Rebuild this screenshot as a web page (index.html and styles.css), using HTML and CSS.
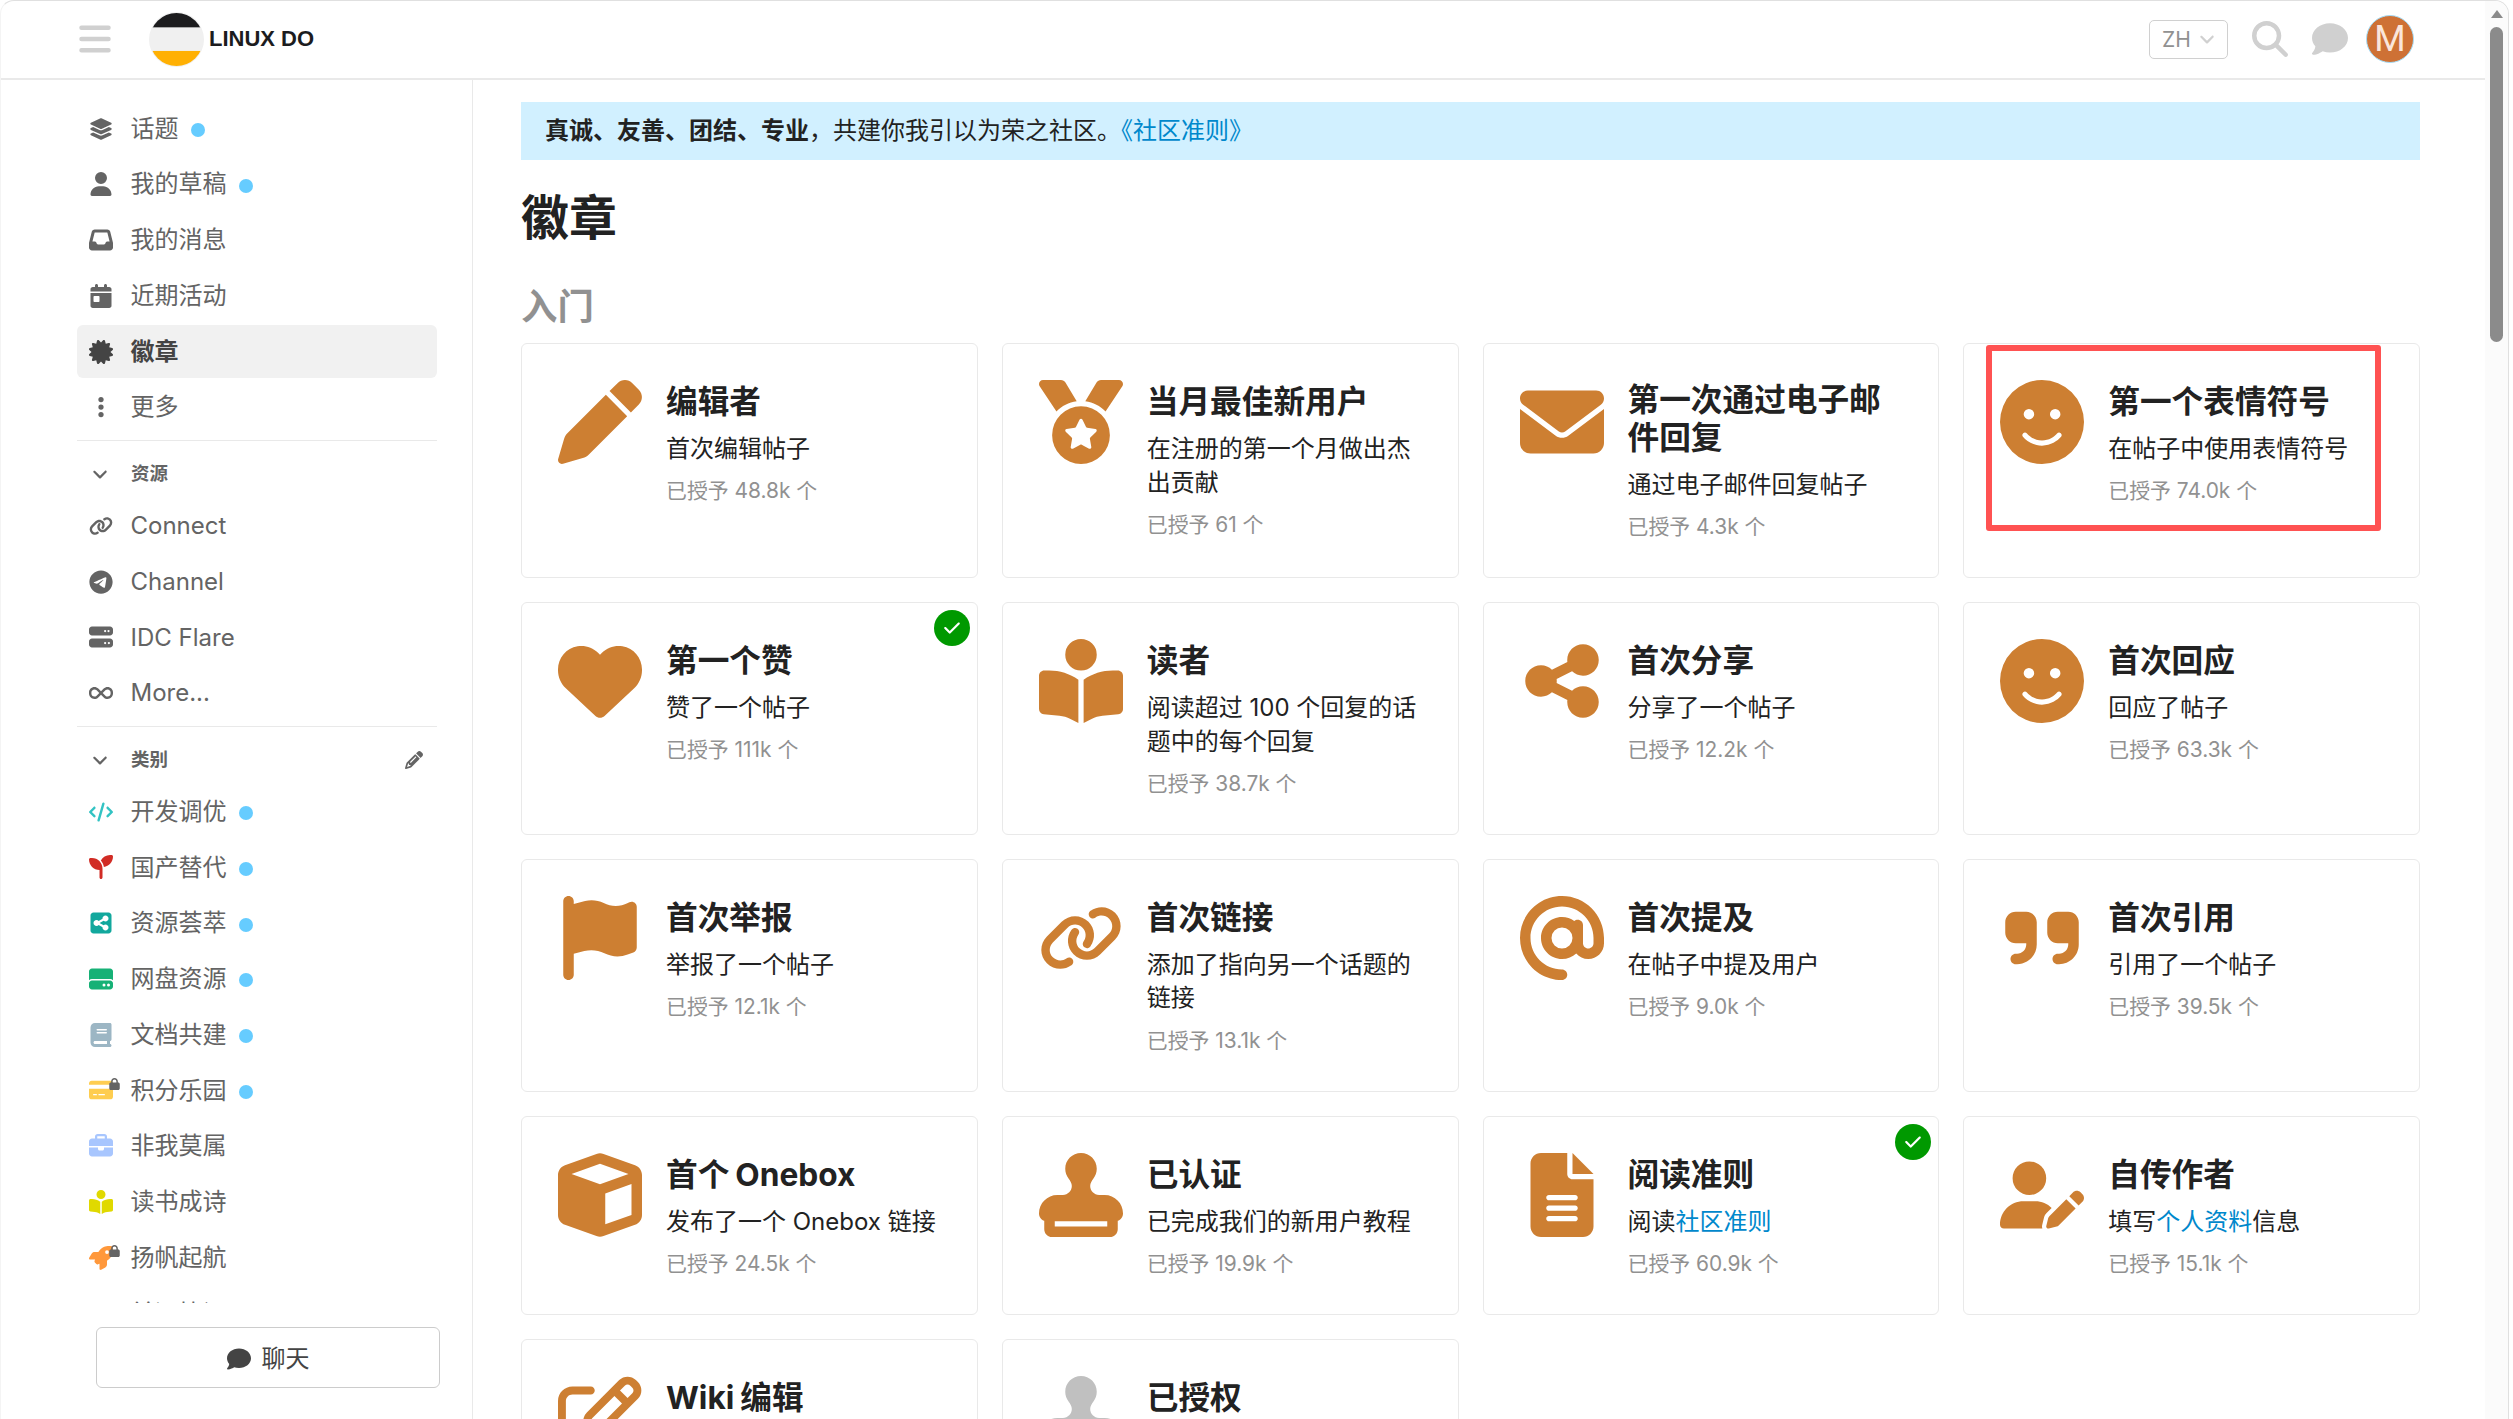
FILE: index.html
```html
<!DOCTYPE html>
<html lang="zh-CN">
<head>
    <meta charset="UTF-8">
    <meta name="viewport" content="width=device-width, initial-scale=1.0">
    <title>徽章 - LINUX DO</title>
    <link rel="stylesheet" href="styles.css">
</head>
<body>
    <!-- Icon sprite -->
    <svg class="sprite" xmlns="http://www.w3.org/2000/svg">
        <symbol id="bars" viewBox="0 0 448 512"><path d="M32 64h384a32 32 0 0 1 0 64H32a32 32 0 0 1 0-64zM32 224h384a32 32 0 0 1 0 64H32a32 32 0 0 1 0-64zM32 384h384a32 32 0 0 1 0 64H32a32 32 0 0 1 0-64z"/></symbol>
        <symbol id="layer-group" viewBox="0 0 576 512"><path d="M264.5 5.2c14.9-6.9 32.1-6.9 47 0l218.6 101c8.5 3.9 13.9 12.4 13.9 21.8s-5.4 17.9-13.9 21.8l-218.6 101c-14.9 6.9-32.1 6.9-47 0L45.9 149.8C37.4 145.8 32 137.3 32 128s5.4-17.9 13.9-21.8L264.5 5.2zM476.9 209.6l53.2 24.6c8.5 3.9 13.9 12.4 13.9 21.8s-5.4 17.9-13.9 21.8l-218.6 101c-14.9 6.9-32.1 6.9-47 0L45.9 277.8C37.4 273.8 32 265.3 32 256s5.4-17.9 13.9-21.8l53.2-24.6 152 70.2c23.4 10.8 50.4 10.8 73.8 0l152-70.2zm-152 198.2l152-70.2 53.2 24.6c8.5 3.9 13.9 12.4 13.9 21.8s-5.4 17.9-13.9 21.8l-218.6 101c-14.9 6.9-32.1 6.9-47 0L45.9 405.8C37.4 401.8 32 393.3 32 384s5.4-17.9 13.9-21.8l53.2-24.6 152 70.2c23.4 10.8 50.4 10.8 73.8 0z"/></symbol>
        <symbol id="user" viewBox="0 0 448 512"><path d="M224 256A128 128 0 1 0 224 0a128 128 0 1 0 0 256zm-45.7 48C79.8 304 0 383.8 0 482.3C0 498.7 13.3 512 29.7 512l388.6 0c16.4 0 29.7-13.3 29.7-29.7C448 383.8 368.2 304 269.7 304l-91.4 0z"/></symbol>
        <symbol id="inbox" viewBox="0 0 512 512"><path d="M121 32C91.6 32 66 52 58.9 80.5L1.9 308.4C.6 313.5 0 318.7 0 323.9L0 416c0 35.3 28.7 64 64 64l384 0c35.3 0 64-28.7 64-64l0-92.1c0-5.2-.6-10.4-1.9-15.5l-57-227.9C446 52 420.4 32 391 32L121 32zm0 64l270 0 48 192-51.2 0c-12.1 0-23.2 6.8-28.6 17.7l-14.3 28.6c-5.4 10.8-16.5 17.7-28.6 17.7l-120.4 0c-12.1 0-23.2-6.8-28.6-17.7l-14.3-28.6c-5.4-10.8-16.5-17.7-28.6-17.7L73 288 121 96z"/></symbol>
        <symbol id="calendar-day" viewBox="0 0 448 512"><path d="M128 0c17.7 0 32 14.3 32 32l0 32 128 0 0-32c0-17.7 14.3-32 32-32s32 14.3 32 32l0 32 48 0c26.5 0 48 21.5 48 48l0 48L0 160l0-48C0 85.5 21.5 64 48 64l48 0 0-32c0-17.7 14.3-32 32-32zM0 192l448 0 0 272c0 26.5-21.5 48-48 48L48 512c-26.5 0-48-21.5-48-48L0 192zm80 64c-8.8 0-16 7.2-16 16l0 96c0 8.8 7.2 16 16 16l96 0c8.8 0 16-7.2 16-16l0-96c0-8.8-7.2-16-16-16l-96 0z"/></symbol>
        <symbol id="certificate" viewBox="0 0 512 512"><path d="M211 7.3C205 1 196-1.4 187.6 .8s-14.9 8.9-17.1 17.3L154.7 80.6l-62-17.5c-8.4-2.4-17.4 0-23.5 6.1s-8.5 15.1-6.1 23.5l17.5 62L18.1 170.6c-8.4 2.1-15 8.7-17.3 17.1S1 205 7.3 211l46.2 45L7.3 301C1 307-1.4 316 .8 324.4s8.9 14.9 17.3 17.1l62.5 15.8-17.5 62c-2.4 8.4 0 17.4 6.1 23.5s15.1 8.5 23.5 6.1l62-17.5 15.8 62.5c2.1 8.4 8.7 15 17.1 17.3s17.3-.2 23.4-6.4l45-46.2 45 46.2c6.1 6.2 15 8.7 23.4 6.4s14.9-8.9 17.1-17.3l15.8-62.5 62 17.5c8.4 2.4 17.4 0 23.5-6.1s8.5-15.1 6.1-23.5l-17.5-62 62.5-15.8c8.4-2.1 15-8.7 17.3-17.1s-.2-17.4-6.4-23.4l-46.2-45 46.2-45c6.2-6.1 8.7-15 6.4-23.4s-8.9-14.9-17.3-17.1l-62.5-15.8 17.5-62c2.4-8.4 0-17.4-6.1-23.5s-15.1-8.5-23.5-6.1l-62 17.5L341.4 18.1c-2.1-8.4-8.7-15-17.1-17.3S307 1 301 7.3L256 53.5 211 7.3z"/></symbol>
        <symbol id="ellipsis" viewBox="0 0 128 512"><circle cx="64" cy="96" r="56"/><circle cx="64" cy="256" r="56"/><circle cx="64" cy="416" r="56"/></symbol>
        <symbol id="angle-down" viewBox="0 0 448 512"><path d="M201.4 374.6c12.5 12.5 32.8 12.5 45.3 0l160-160c12.5-12.5 12.5-32.8 0-45.3s-32.8-12.5-45.3 0L224 306.7 86.6 169.4c-12.5-12.5-32.8-12.5-45.3 0s-12.5 32.8 0 45.3l160 160z"/></symbol>
        <symbol id="link" viewBox="0 0 640 512"><path d="M579.8 267.7c56.5-56.5 56.5-148 0-204.5c-50-50-128.8-56.5-186.3-15.4l-1.6 1.1c-14.4 10.3-17.7 30.3-7.4 44.6s30.3 17.7 44.6 7.4l1.6-1.1c32.1-22.9 76-19.3 103.8 8.6c31.5 31.5 31.5 82.5 0 114L422.3 334.8c-31.5 31.5-82.5 31.5-114 0c-27.9-27.9-31.5-71.8-8.6-103.8l1.1-1.6c10.3-14.4 6.9-34.4-7.4-44.6s-34.4-6.9-44.6 7.4l-1.1 1.6C206.5 251.2 213 330 263 380c56.5 56.5 148 56.5 204.5 0L579.8 267.7zM60.2 244.3c-56.5 56.5-56.5 148 0 204.5c50 50 128.8 56.5 186.3 15.4l1.6-1.1c14.4-10.3 17.7-30.3 7.4-44.6s-30.3-17.7-44.6-7.4l-1.6 1.1c-32.1 22.9-76 19.3-103.8-8.6C74 372 74 321 105.5 289.5L217.7 177.2c31.5-31.5 82.5-31.5 114 0c27.9 27.9 31.5 71.8 8.6 103.9l-1.1 1.6c-10.3 14.4-6.9 34.4 7.4 44.6s34.4 6.9 44.6-7.4l1.1-1.6C433.5 260.8 427 182 377 132c-56.5-56.5-148-56.5-204.5 0L60.2 244.3z"/></symbol>
        <symbol id="telegram" viewBox="0 0 496 512"><path d="M248,8C111.033,8,0,119.033,0,256S111.033,504,248,504,496,392.967,496,256,384.967,8,248,8ZM362.952,176.66c-3.732,39.215-19.881,134.378-28.1,178.3-3.476,18.584-10.322,24.816-16.948,25.425-14.4,1.326-25.338-9.517-39.287-18.661-21.827-14.308-34.158-23.215-55.346-37.177-24.485-16.135-8.612-25,5.342-39.5,3.652-3.793,67.107-61.51,68.335-66.746.153-.655.3-3.1-1.154-4.384s-3.59-.849-5.135-.5q-3.283.746-104.608,69.142-14.845,10.194-26.894,9.934c-8.855-.191-25.888-5.006-38.551-9.123-15.531-5.048-27.875-7.717-26.8-16.291q.84-6.7,18.45-13.7,108.446-47.248,144.628-62.3c68.872-28.647,83.183-33.623,92.511-33.789,2.052-.034,6.639.474,9.61,2.885a10.452,10.452,0,0,1,3.53,6.716A43.765,43.765,0,0,1,362.952,176.66Z"/></symbol>
        <symbol id="server" viewBox="0 0 512 512"><path d="M64 32C28.7 32 0 60.7 0 96l0 64c0 35.3 28.7 64 64 64l384 0c35.3 0 64-28.7 64-64l0-64c0-35.3-28.7-64-64-64L64 32zm280 72a24 24 0 1 1 0 48 24 24 0 1 1 0-48zm48 24a24 24 0 1 1 48 0 24 24 0 1 1 -48 0zM64 288c-35.3 0-64 28.7-64 64l0 64c0 35.3 28.7 64 64 64l384 0c35.3 0 64-28.7 64-64l0-64c0-35.3-28.7-64-64-64L64 288zm280 72a24 24 0 1 1 0 48 24 24 0 1 1 0-48zm56 24a24 24 0 1 1 48 0 24 24 0 1 1 -48 0z"/></symbol>
        <symbol id="infinity" viewBox="0 0 640 512"><path d="M0 241.1C0 161 65 96 145.1 96c38.5 0 75.4 15.3 102.6 42.5L320 210.7l72.2-72.2C419.5 111.3 456.4 96 494.9 96C575 96 640 161 640 241.1l0 29.7C640 351 575 416 494.9 416c-38.5 0-75.4-15.3-102.6-42.5L320 301.3l-72.2 72.2C220.5 400.7 183.6 416 145.1 416C65 416 0 351 0 270.9l0-29.7zM274.7 256l-72.2-72.2c-15.2-15.2-35.9-23.8-57.4-23.8C100.3 160 64 196.3 64 241.1l0 29.7c0 44.8 36.3 81.1 81.1 81.1c21.5 0 42.2-8.5 57.4-23.8L274.7 256zm90.5 0l72.2 72.2c15.2 15.2 35.9 23.8 57.4 23.8c44.8 0 81.1-36.3 81.1-81.1l0-29.7c0-44.8-36.3-81.1-81.1-81.1c-21.5 0-42.2 8.5-57.4 23.8L365.3 256z"/></symbol>
        <symbol id="pencil" viewBox="0 0 512 512"><path d="M410.3 231l11.3-11.3-33.9-33.9-62.1-62.1L291.7 89.8l-11.3 11.3-22.6 22.6L58.6 322.9c-10.4 10.4-18 23.3-22.2 37.4L1 480.7c-2.5 8.4-.2 17.5 6.1 23.7s15.3 8.5 23.7 6.1l120.3-35.4c14.1-4.2 27-11.8 37.4-22.2L387.7 253.7 410.3 231zM160 399.4l-9.1 22.7c-4 3.1-8.5 5.4-13.3 6.9L59.4 452l23-78.1c1.4-4.9 3.8-9.4 6.9-13.3l22.7-9.1 0 32c0 8.8 7.2 16 16 16l32 0zM362.7 18.7L348.3 33.2 325.7 55.8 314.3 67.1l33.9 33.9 62.1 62.1 33.9 33.9 11.3-11.3 22.6-22.6 14.5-14.5c25-25 25-65.5 0-90.5L453.3 18.7c-25-25-65.5-25-90.5 0zm-47.4 168l-144 144c-6.2 6.2-16.4 6.2-22.6 0s-6.2-16.4 0-22.6l144-144c6.2-6.2 16.4-6.2 22.6 0s6.2 16.4 0 22.6z"/></symbol>
        <symbol id="pen" viewBox="0 0 512 512"><path d="M362.7 19.3L314.3 67.7 444.3 197.7l48.4-48.4c25-25 25-65.5 0-90.5L453.3 19.3c-25-25-65.5-25-90.5 0zm-71 71L58.6 323.5c-10.4 10.4-18 23.3-22.2 37.4L1 481.2C-1.5 489.7 .8 498.8 7 505s15.3 8.5 23.7 6.1l120.3-35.4c14.1-4.2 27-11.8 37.4-22.2L421.7 220.3 291.7 90.3z"/></symbol>
        <symbol id="code" viewBox="0 0 640 512"><path d="M392.8 1.2c-17-4.9-34.7 5-39.6 22l-128 448c-4.9 17 5 34.7 22 39.6s34.7-5 39.6-22l128-448c4.9-17-5-34.7-22-39.6zm80.6 120.1c-12.5 12.5-12.5 32.8 0 45.3L562.7 256l-89.4 89.4c-12.5 12.5-12.5 32.8 0 45.3s32.8 12.5 45.3 0l112-112c12.5-12.5 12.5-32.8 0-45.3l-112-112c-12.5-12.5-32.8-12.5-45.3 0zm-306.7 0c-12.5-12.5-32.8-12.5-45.3 0l-112 112c-12.5 12.5-12.5 32.8 0 45.3l112 112c12.5 12.5 32.8 12.5 45.3 0s12.5-32.8 0-45.3L77.3 256l89.4-89.4c12.5-12.5 12.5-32.8 0-45.3z"/></symbol>
        <symbol id="seedling" viewBox="0 0 512 512"><path d="M512 32c0 113.6-84.6 207.5-194.2 222c-7.1-53.4-30.6-101.6-65.3-139.3C290.8 46.3 364 0 448 0l32 0c17.7 0 32 14.3 32 32zM0 96C0 78.3 14.3 64 32 64l32 0c123.7 0 224 100.3 224 224l0 32 0 160c0 17.7-14.3 32-32 32s-32-14.3-32-32l0-160C100.3 320 0 219.7 0 96z"/></symbol>
        <symbol id="square-share" viewBox="0 0 448 512"><path d="M64 32C28.7 32 0 60.7 0 96L0 416c0 35.3 28.7 64 64 64l320 0c35.3 0 64-28.7 64-64l0-320c0-35.3-28.7-64-64-64L64 32zM384 160c0 35.3-28.7 64-64 64c-15.4 0-29.5-5.4-40.6-14.5L194.1 256l85.3 46.5c11-9.1 25.2-14.5 40.6-14.5c35.3 0 64 28.7 64 64s-28.7 64-64 64s-64-28.7-64-64c0-2.5 .1-4.9 .4-7.3L174.5 300c-11.7 12.3-28.2 20-46.5 20c-35.3 0-64-28.7-64-64s28.7-64 64-64c18.3 0 34.8 7.7 46.5 20l81.9-44.7c-.3-2.4-.4-4.9-.4-7.3c0-35.3 28.7-64 64-64s64 28.7 64 64z"/></symbol>
        <symbol id="hard-drive" viewBox="0 0 512 512"><path d="M0 96C0 60.7 28.7 32 64 32l384 0c35.3 0 64 28.7 64 64l0 184.4c-17-15.2-39.4-24.4-64-24.4L64 256c-24.6 0-47 9.2-64 24.4L0 96zM64 288l384 0c35.3 0 64 28.7 64 64l0 64c0 35.3-28.7 64-64 64L64 480c-35.3 0-64-28.7-64-64l0-64c0-35.3 28.7-64 64-64zM320 416a32 32 0 1 0 0-64 32 32 0 1 0 0 64zm128-32a32 32 0 1 0 -64 0 32 32 0 1 0 64 0z"/></symbol>
        <symbol id="book" viewBox="0 0 448 512"><path d="M96 0C43 0 0 43 0 96L0 416c0 53 43 96 96 96l288 0 32 0c17.7 0 32-14.3 32-32s-14.3-32-32-32l0-64c17.7 0 32-14.3 32-32l0-320c0-17.7-14.3-32-32-32L384 0 96 0zm0 384l256 0 0 64L96 448c-17.7 0-32-14.3-32-32s14.3-32 32-32zm32-240c0-8.8 7.2-16 16-16l192 0c8.8 0 16 7.2 16 16s-7.2 16-16 16l-192 0c-8.8 0-16-7.2-16-16zm16 48l192 0c8.8 0 16 7.2 16 16s-7.2 16-16 16l-192 0c-8.8 0-16-7.2-16-16s7.2-16 16-16z"/></symbol>
        <symbol id="credit-card" viewBox="0 0 576 512"><path d="M64 32C28.7 32 0 60.7 0 96l0 32 576 0 0-32c0-35.3-28.7-64-64-64L64 32zM576 224L0 224 0 416c0 35.3 28.7 64 64 64l448 0c35.3 0 64-28.7 64-64l0-192zM112 352l64 0c8.8 0 16 7.2 16 16s-7.2 16-16 16l-64 0c-8.8 0-16-7.2-16-16s7.2-16 16-16zm112 16c0-8.8 7.2-16 16-16l128 0c8.8 0 16 7.2 16 16s-7.2 16-16 16l-128 0c-8.8 0-16-7.2-16-16z"/></symbol>
        <symbol id="briefcase" viewBox="0 0 512 512"><path d="M184 48l144 0c4.4 0 8 3.6 8 8l0 40L176 96l0-40c0-4.4 3.6-8 8-8zm-56 8l0 40L64 96C28.7 96 0 124.7 0 160l0 96 192 0 128 0 192 0 0-96c0-35.3-28.7-64-64-64l-64 0 0-40c0-30.9-25.1-56-56-56L184 0c-30.9 0-56 25.1-56 56zM512 288l-192 0 0 32c0 17.7-14.3 32-32 32l-64 0c-17.7 0-32-14.3-32-32l0-32L0 288 0 416c0 35.3 28.7 64 64 64l384 0c35.3 0 64-28.7 64-64l0-128z"/></symbol>
        <symbol id="reader" viewBox="0 0 512 512"><path d="M160 96a96 96 0 1 1 192 0A96 96 0 1 1 160 96zm80 152l0 264-48.4-24.2c-20.9-10.4-43.5-17-66.8-19.3l-96-9.6C12.5 457.2 0 443.5 0 427L0 224c0-17.7 14.3-32 32-32l30.3 0c63.6 0 125.6 19.6 177.7 56zm32 264l0-264c52.1-36.4 114.1-56 177.7-56l30.3 0c17.7 0 32 14.3 32 32l0 203c0 16.4-12.5 30.2-28.8 31.8l-96 9.6c-23.2 2.3-45.9 8.9-66.8 19.3L272 512z"/></symbol>
        <symbol id="rocket" viewBox="0 0 512 512"><path d="M156.6 384.9L125.7 354c-8.5-8.5-11.5-20.8-7.7-32.2c3-8.9 7-20.5 11.8-33.8L24 288c-8.6 0-16.6-4.6-20.9-12.1s-4.2-16.7 .2-24.1l52.5-88.5c13-21.9 36.5-35.3 61.9-35.3l82.3 0c2.4-4 4.8-7.7 7.2-11.3C289.1-4.1 411.1-8.1 483.9 5.3c11.6 2.1 20.6 11.2 22.8 22.8c13.4 72.9 9.3 194.8-111.4 276.7c-3.5 2.4-7.3 4.8-11.3 7.2v82.3c0 25.4-13.4 49-35.3 61.9l-88.5 52.5c-7.4 4.4-16.6 4.5-24.1 .2s-12.1-12.2-12.1-20.9V380.8c-14.1 4.9-26.4 8.9-35.7 11.9c-11.2 3.6-23.4 .5-31.8-7.8zM384 168a40 40 0 1 0 0-80 40 40 0 1 0 0 80z"/></symbol>
        <symbol id="lock" viewBox="0 0 448 512"><path d="M144 144l0 48 160 0 0-48c0-44.2-35.8-80-80-80s-80 35.8-80 80zM80 192l0-48C80 64.5 144.5 0 224 0s144 64.5 144 144l0 48 16 0c35.3 0 64 28.7 64 64l0 192c0 35.3-28.7 64-64 64L64 512c-35.3 0-64-28.7-64-64L0 256c0-35.3 28.7-64 64-64l16 0z"/></symbol>
        <symbol id="comment" viewBox="0 0 512 512"><path d="M512 240c0 114.9-114.6 208-256 208c-37.1 0-72.3-6.4-104.1-17.9c-11.9 8.7-31.3 20.6-54.3 30.6C73.6 471.1 44.7 480 16 480c-6.5 0-12.3-3.9-14.8-9.9c-2.5-6-1.1-12.8 3.4-17.4l.3-.3c.3-.3 .7-.7 1.3-1.4c1.1-1.2 2.8-3.1 4.9-5.7c4.1-5 9.6-12.4 15.2-21.6c10-16.6 19.5-38.4 21.4-62.9C17.7 326.8 0 285.1 0 240C0 125.1 114.6 32 256 32s256 93.1 256 208z"/></symbol>
        <symbol id="search" viewBox="0 0 512 512"><path d="M416 208c0 45.9-14.9 88.3-40 122.7L502.6 457.4c12.5 12.5 12.5 32.8 0 45.3s-32.8 12.5-45.3 0L330.7 376c-34.4 25.2-76.8 40-122.7 40C93.1 416 0 322.9 0 208S93.1 0 208 0S416 93.1 416 208zM208 352a144 144 0 1 0 0-288 144 144 0 1 0 0 288z"/></symbol>
        <symbol id="medal" viewBox="0 0 512 512"><path d="M4.1 38.2C1.4 34.2 0 29.4 0 24.6C0 11 11 0 24.6 0L133.9 0c11.2 0 21.7 5.9 27.4 15.5l68.5 114.1c-48.2 6.1-91.3 28.6-123.4 61.9L4.1 38.2zm503.7 0L405.6 191.5c-32.1-33.3-75.2-55.8-123.4-61.9L350.7 15.5C356.5 5.9 366.9 0 378.1 0L487.4 0C501 0 512 11 512 24.6c0 4.8-1.4 9.6-4.1 13.6zM80 336a176 176 0 1 1 352 0A176 176 0 1 1 80 336zm184.4-94.9c-3.4-7-13.3-7-16.8 0l-22.4 45.4c-1.4 2.8-4 4.7-7 5.1L168 298.9c-7.7 1.1-10.7 10.5-5.2 16l36.3 35.4c2.2 2.2 3.2 5.2 2.7 8.3l-8.6 49.9c-1.3 7.6 6.7 13.5 13.6 9.9l44.8-23.6c2.7-1.4 6-1.4 8.7 0l44.8 23.6c6.9 3.6 14.9-2.2 13.6-9.9l-8.6-49.9c-.5-3 .5-6.1 2.7-8.3l36.3-35.4c5.6-5.4 2.5-14.8-5.2-16l-50.1-7.3c-3-.4-5.7-2.4-7-5.1l-22.4-45.4z"/></symbol>
        <symbol id="envelope" viewBox="0 0 512 512"><path d="M48 64C21.5 64 0 85.5 0 112c0 15.1 7.1 29.3 19.2 38.4L236.8 313.6c11.4 8.5 27 8.5 38.4 0L492.8 150.4c12.1-9.1 19.2-23.3 19.2-38.4c0-26.5-21.5-48-48-48L48 64zM0 176L0 384c0 35.3 28.7 64 64 64l384 0c35.3 0 64-28.7 64-64l0-208L294.4 339.2c-22.8 17.1-54 17.1-76.8 0L0 176z"/></symbol>
        <symbol id="smile" viewBox="0 0 512 512"><path d="M256 512A256 256 0 1 0 256 0a256 256 0 1 0 0 512zM164.1 325.5C182 346.2 212.6 368 256 368s74-21.8 91.9-42.5c5.8-6.7 15.9-7.4 22.6-1.6s7.4 15.9 1.6 22.6C349.8 372.1 311.1 400 256 400s-93.8-27.9-116.1-53.5c-5.8-6.7-5.1-16.8 1.6-22.6s16.8-5.1 22.6 1.6zM144.4 208a32 32 0 1 1 64 0 32 32 0 1 1 -64 0zm192-32a32 32 0 1 1 0 64 32 32 0 1 1 0-64z"/></symbol>
        <symbol id="heart" viewBox="0 0 512 512"><path d="M47.6 300.4L228.3 469.1c7.5 7 17.4 10.9 27.7 10.9s20.2-3.9 27.7-10.9L464.4 300.4c30.4-28.3 47.6-68 47.6-109.5v-5.8c0-69.9-50.5-129.5-119.4-141C347 36.5 300.6 51.4 268 84L256 96 244 84c-32.6-32.6-79-47.5-124.6-39.9C50.5 55.6 0 115.2 0 185.1v5.8c0 41.5 17.2 81.2 47.6 109.5z"/></symbol>
        <symbol id="share" viewBox="0 0 448 512"><path d="M352 224c53 0 96-43 96-96s-43-96-96-96s-96 43-96 96c0 4 .2 8 .7 11.9l-94.1 47C145.4 170.2 121.9 160 96 160c-53 0-96 43-96 96s43 96 96 96c25.9 0 49.4-10.2 66.6-26.9l94.1 47c-.5 3.9-.7 7.8-.7 11.9c0 53 43 96 96 96s96-43 96-96s-43-96-96-96c-25.9 0-49.4 10.2-66.6 26.9l-94.1-47c.5-3.9 .7-7.8 .7-11.9s-.2-8-.7-11.9l94.1-47C302.6 213.8 326.1 224 352 224z"/></symbol>
        <symbol id="flag" viewBox="0 0 448 512"><path d="M64 32C64 14.3 49.7 0 32 0S0 14.3 0 32L0 64 0 368 0 480c0 17.7 14.3 32 32 32s32-14.3 32-32l0-128 64.3-16.1c41.1-10.3 84.6-5.5 122.5 13.4c44.2 22.1 95.5 24.8 141.7 7.4l34.7-13c12.5-4.7 20.8-16.6 20.8-30l0-247.7c0-23-24.2-38-44.8-27.7l-9.6 4.8c-46.3 23.2-100.8 23.2-147.1 0c-35.1-17.6-75.4-22-113.5-12.5L64 48l0-16z"/></symbol>
        <symbol id="at" viewBox="0 0 512 512"><path d="M256 64C150 64 64 150 64 256s86 192 192 192c17.7 0 32 14.3 32 32s-14.3 32-32 32C114.6 512 0 397.4 0 256S114.6 0 256 0S512 114.6 512 256l0 32c0 53-43 96-96 96c-29.3 0-55.6-13.2-73.2-33.9C320 371.1 289.5 384 256 384c-70.7 0-128-57.3-128-128s57.3-128 128-128c27.9 0 53.7 8.9 74.7 24.1c5.7-5 13.1-8.1 21.3-8.1c17.7 0 32 14.3 32 32l0 80 0 32c0 17.7 14.3 32 32 32s32-14.3 32-32l0-32c0-106-86-192-192-192zm64 192a64 64 0 1 0 -128 0 64 64 0 1 0 128 0z"/></symbol>
        <symbol id="quote-right" viewBox="0 0 448 512"><path d="M448 296c0 66.3-53.7 120-120 120l-8 0c-17.7 0-32-14.3-32-32s14.3-32 32-32l8 0c30.9 0 56-25.1 56-56l0-8-64 0c-35.3 0-64-28.7-64-64l0-64c0-35.3 28.7-64 64-64l64 0c35.3 0 64 28.7 64 64l0 32 0 32 0 72zm-256 0c0 66.3-53.7 120-120 120l-8 0c-17.7 0-32-14.3-32-32s14.3-32 32-32l8 0c30.9 0 56-25.1 56-56l0-8-64 0c-35.3 0-64-28.7-64-64l0-64c0-35.3 28.7-64 64-64l64 0c35.3 0 64 28.7 64 64l0 32 0 32 0 72z"/></symbol>
        <symbol id="cube" viewBox="0 0 512 512"><path d="M234.5 5.7c13.9-5 29.1-5 43.1 0l192 68.6C495 83.4 512 107.5 512 134.6l0 242.9c0 27-17 51.2-42.5 60.3l-192 68.6c-13.9 5-29.1 5-43.1 0l-192-68.6C17 428.6 0 404.5 0 377.4L0 134.6c0-27 17-51.2 42.5-60.3l192-68.6zM256 66L82.3 128 256 190l173.7-62L256 66zm32 368.6l160-57.1 0-188L288 246.6l0 188z"/></symbol>
        <symbol id="stamp" viewBox="0 0 512 512"><path d="M312 201.8c0-17.4 9.2-33.2 19.9-47C344.5 138.5 352 118.1 352 96c0-53-43-96-96-96s-96 43-96 96c0 22.1 7.5 42.5 20.1 58.8c10.7 13.8 19.9 29.6 19.9 47c0 29.9-24.3 54.2-54.2 54.2L112 256C50.1 256 0 306.1 0 368c0 20.9 13.4 38.7 32 45.3L32 464c0 26.5 21.5 48 48 48l352 0c26.5 0 48-21.5 48-48l0-50.7c18.6-6.6 32-24.4 32-45.3c0-61.9-50.1-112-112-112l-33.8 0c-29.9 0-54.2-24.3-54.2-54.2zM416 416l0 32L96 448l0-32 320 0z"/></symbol>
        <symbol id="file-lines" viewBox="0 0 384 512"><path d="M64 0C28.7 0 0 28.7 0 64L0 448c0 35.3 28.7 64 64 64l256 0c35.3 0 64-28.7 64-64l0-288-128 0c-17.7 0-32-14.3-32-32L224 0 64 0zM256 0l0 128 128 0L256 0zM112 256l160 0c8.8 0 16 7.2 16 16s-7.2 16-16 16l-160 0c-8.8 0-16-7.2-16-16s7.2-16 16-16zm0 64l160 0c8.8 0 16 7.2 16 16s-7.2 16-16 16l-160 0c-8.8 0-16-7.2-16-16s7.2-16 16-16zm0 64l160 0c8.8 0 16 7.2 16 16s-7.2 16-16 16l-160 0c-8.8 0-16-7.2-16-16s7.2-16 16-16z"/></symbol>
        <symbol id="user-pen" viewBox="0 0 640 512"><path d="M224 256A128 128 0 1 0 224 0a128 128 0 1 0 0 256zm-45.7 48C79.8 304 0 383.8 0 482.3C0 498.7 13.3 512 29.7 512l293.1 0c-3.1-8.8-3.7-18.4-1.4-27.8l15-60.1c2.8-11.3 8.6-21.5 16.8-29.7l40.3-40.3c-32.1-31-75.7-50.1-123.9-50.1l-91.4 0zm435.5-68.3c-15.6-15.6-40.9-15.6-56.6 0l-29.4 29.4 71 71 29.4-29.4c15.6-15.6 15.6-40.9 0-56.6l-14.4-14.4zM375.9 417c-4.1 4.1-7 9.2-8.4 14.9l-15 60.1c-1.4 5.5 .2 11.2 4.2 15.2s9.7 5.6 15.2 4.2l60.1-15c5.6-1.4 10.8-4.3 14.9-8.4L576.1 358.7l-71-71L375.9 417z"/></symbol>
        <symbol id="edit" viewBox="0 0 512 512"><path d="M441 58.9L453.1 71c9.4 9.4 9.4 24.6 0 33.9L424 134.1 377.9 88 407 58.9c9.4-9.4 24.6-9.4 33.9 0zM209.8 256.2L344 121.9 390.1 168 255.8 302.2c-2.9 2.9-6.5 5-10.4 6.1l-58.5 16.7 16.7-58.5c1.1-3.9 3.2-7.5 6.1-10.4zM373.1 25L175.8 222.2c-8.7 8.7-15 19.4-18.3 31.1l-28.6 100c-2.4 8.4-.1 17.4 6.1 23.6s15.2 8.5 23.6 6.1l100-28.6c11.8-3.4 22.5-9.7 31.1-18.3L487 138.9c28.1-28.1 28.1-73.7 0-101.8L474.9 25C446.8-3.1 401.2-3.1 373.1 25zM88 64C39.4 64 0 103.4 0 152L0 424c0 48.6 39.4 88 88 88l272 0c48.6 0 88-39.4 88-88l0-112c0-13.3-10.7-24-24-24s-24 10.7-24 24l0 112c0 22.1-17.9 40-40 40L88 464c-22.1 0-40-17.9-40-40l0-272c0-22.1 17.9-40 40-40l112 0c13.3 0 24-10.7 24-24s-10.7-24-24-24L88 64z"/></symbol>
        <symbol id="check" viewBox="0 0 448 512"><path d="M438.6 105.4c12.5 12.5 12.5 32.8 0 45.3l-256 256c-12.5 12.5-32.8 12.5-45.3 0l-128-128c-12.5-12.5-12.5-32.8 0-45.3s32.8-12.5 45.3 0L160 338.7 393.4 105.4c12.5-12.5 32.8-12.5 45.3 0z"/></symbol>
    </svg>

    <div class="window">
        <div class="page">
            <header class="header">
                <svg class="menu-icon"><use href="#bars"/></svg>
                <a class="logo" href="#">
                    <svg class="logo-mark" viewBox="0 0 120 120">
                        <clipPath id="disc"><circle cx="60" cy="60" r="58"/></clipPath>
                        <circle cx="60" cy="60" r="60" fill="#f0f0f0"/>
                        <g clip-path="url(#disc)">
                            <rect width="120" height="34" fill="#1c1c1e"/>
                            <rect y="34" width="120" height="51" fill="#f0f0f0"/>
                            <rect y="85" width="120" height="35" fill="#ffb003"/>
                        </g>
                    </svg>
                    <span class="logo-text">LINUX DO</span>
                </a>
                <div class="header-tools">
                    <button class="lang">ZH <svg><use href="#angle-down"/></svg></button>
                    <svg class="tool-icon"><use href="#search"/></svg>
                    <svg class="tool-icon"><use href="#comment"/></svg>
                    <span class="avatar">M</span>
                </div>
            </header>

            <div class="main">
                <aside class="sidebar">
                    <nav class="sidebar-scroll">
                        <div class="section">
                            <a class="item"><svg><use href="#layer-group"/></svg>话题<i class="dot"></i></a>
                            <a class="item"><svg><use href="#user"/></svg>我的草稿<i class="dot"></i></a>
                            <a class="item"><svg><use href="#inbox"/></svg>我的消息</a>
                            <a class="item"><svg><use href="#calendar-day"/></svg>近期活动</a>
                            <a class="item active"><svg><use href="#certificate"/></svg>徽章</a>
                            <a class="item"><svg><use href="#ellipsis"/></svg>更多</a>
                        </div>
                        <div class="section">
                            <div class="section-title"><svg class="caret"><use href="#angle-down"/></svg>资源</div>
                            <a class="item"><svg><use href="#link"/></svg>Connect</a>
                            <a class="item"><svg><use href="#telegram"/></svg>Channel</a>
                            <a class="item"><svg><use href="#server"/></svg>IDC Flare</a>
                            <a class="item"><svg><use href="#infinity"/></svg>More...</a>
                        </div>
                        <div class="section">
                            <div class="section-title"><svg class="caret"><use href="#angle-down"/></svg>类别<svg class="edit"><use href="#pencil"/></svg></div>
                            <a class="item"><svg class="c-dev"><use href="#code"/></svg>开发调优<i class="dot"></i></a>
                            <a class="item"><svg class="c-domestic"><use href="#seedling"/></svg>国产替代<i class="dot"></i></a>
                            <a class="item"><svg class="c-resource"><use href="#square-share"/></svg>资源荟萃<i class="dot"></i></a>
                            <a class="item"><svg class="c-drive"><use href="#hard-drive"/></svg>网盘资源<i class="dot"></i></a>
                            <a class="item"><svg class="c-wiki"><use href="#book"/></svg>文档共建<i class="dot"></i></a>
                            <a class="item"><svg class="c-credit"><use href="#credit-card"/></svg><svg class="lock"><use href="#lock"/></svg>积分乐园<i class="dot"></i></a>
                            <a class="item"><svg class="c-job"><use href="#briefcase"/></svg>非我莫属</a>
                            <a class="item"><svg class="c-reading"><use href="#reader"/></svg>读书成诗</a>
                            <a class="item"><svg class="c-startup"><use href="#rocket"/></svg><svg class="lock"><use href="#lock"/></svg>扬帆起航</a>
                            <a class="item"><svg></svg>前沿快讯</a>
                        </div>
                    </nav>
                    <button class="chat"><svg><use href="#comment"/></svg>聊天</button>
                </aside>

                <main class="content">
                    <div class="notice"><b>真诚、友善、团结、专业</b>，共建你我引以为荣之社区。<a href="#">《社区准则》</a></div>
                    <h1>徽章</h1>
                    <h2>入门</h2>
                    <div class="badges">
                        <div class="badge">
                            <svg class="badge-icon"><use href="#pen"/></svg>
                            <div class="info"><h3>编辑者</h3><p>首次编辑帖子</p><span>已授予 48.8k 个</span></div>
                        </div>
                        <div class="badge">
                            <svg class="badge-icon"><use href="#medal"/></svg>
                            <div class="info"><h3>当月最佳新用户</h3><p>在注册的第一个月做出杰出贡献</p><span>已授予 61 个</span></div>
                        </div>
                        <div class="badge">
                            <svg class="badge-icon"><use href="#envelope"/></svg>
                            <div class="info"><h3 class="long">第一次通过电子邮件回复</h3><p>通过电子邮件回复帖子</p><span>已授予 4.3k 个</span></div>
                        </div>
                        <div class="badge">
                            <svg class="badge-icon"><use href="#smile"/></svg>
                            <div class="info"><h3>第一个表情符号</h3><p>在帖子中使用表情符号</p><span>已授予 74.0k 个</span></div>
                            <div class="highlight"></div>
                        </div>

                        <div class="badge">
                            <svg class="badge-icon"><use href="#heart"/></svg>
                            <div class="info"><h3>第一个赞</h3><p>赞了一个帖子</p><span>已授予 111k 个</span></div>
                            <div class="granted"><svg><use href="#check"/></svg></div>
                        </div>
                        <div class="badge">
                            <svg class="badge-icon"><use href="#reader"/></svg>
                            <div class="info"><h3>读者</h3><p>阅读超过 100 个回复的话题中的每个回复</p><span>已授予 38.7k 个</span></div>
                        </div>
                        <div class="badge">
                            <svg class="badge-icon"><use href="#share"/></svg>
                            <div class="info"><h3>首次分享</h3><p>分享了一个帖子</p><span>已授予 12.2k 个</span></div>
                        </div>
                        <div class="badge">
                            <svg class="badge-icon"><use href="#smile"/></svg>
                            <div class="info"><h3>首次回应</h3><p>回应了帖子</p><span>已授予 63.3k 个</span></div>
                        </div>

                        <div class="badge">
                            <svg class="badge-icon"><use href="#flag"/></svg>
                            <div class="info"><h3>首次举报</h3><p>举报了一个帖子</p><span>已授予 12.1k 个</span></div>
                        </div>
                        <div class="badge">
                            <svg class="badge-icon"><use href="#link"/></svg>
                            <div class="info"><h3>首次链接</h3><p>添加了指向另一个话题的链接</p><span>已授予 13.1k 个</span></div>
                        </div>
                        <div class="badge">
                            <svg class="badge-icon"><use href="#at"/></svg>
                            <div class="info"><h3>首次提及</h3><p>在帖子中提及用户</p><span>已授予 9.0k 个</span></div>
                        </div>
                        <div class="badge">
                            <svg class="badge-icon"><use href="#quote-right"/></svg>
                            <div class="info"><h3>首次引用</h3><p>引用了一个帖子</p><span>已授予 39.5k 个</span></div>
                        </div>

                        <div class="badge">
                            <svg class="badge-icon"><use href="#cube"/></svg>
                            <div class="info"><h3>首个 Onebox</h3><p>发布了一个 Onebox 链接</p><span>已授予 24.5k 个</span></div>
                        </div>
                        <div class="badge">
                            <svg class="badge-icon"><use href="#stamp"/></svg>
                            <div class="info"><h3>已认证</h3><p>已完成我们的新用户教程</p><span>已授予 19.9k 个</span></div>
                        </div>
                        <div class="badge">
                            <svg class="badge-icon"><use href="#file-lines"/></svg>
                            <div class="info"><h3>阅读准则</h3><p>阅读<a href="#">社区准则</a></p><span>已授予 60.9k 个</span></div>
                            <div class="granted"><svg><use href="#check"/></svg></div>
                        </div>
                        <div class="badge">
                            <svg class="badge-icon"><use href="#user-pen"/></svg>
                            <div class="info"><h3>自传作者</h3><p>填写<a href="#">个人资料</a>信息</p><span>已授予 15.1k 个</span></div>
                        </div>

                        <div class="badge">
                            <svg class="badge-icon"><use href="#edit"/></svg>
                            <div class="info"><h3>Wiki 编辑</h3></div>
                        </div>
                        <div class="badge">
                            <svg class="badge-icon silver"><use href="#stamp"/></svg>
                            <div class="info"><h3>已授权</h3></div>
                        </div>
                    </div>
                </main>
            </div>
        </div>
        <div class="scrollbar">
            <div class="arrow"></div>
            <div class="thumb"></div>
        </div>
    </div>
</body>
</html>
```
FILE: styles.css
```css
* {
    box-sizing: border-box;
}
body {
    margin: 0;
    background: #fff;
    color: #222;
    font-family: Inter, "Noto Sans CJK SC", sans-serif;
    font-size: 24px;
    line-height: 1.4;
    overflow: hidden;
}
svg {
    fill: currentColor;
    flex-shrink: 0;
}
a {
    color: #08c;
    text-decoration: none;
}
.sprite {
    display: none;
}
.window {
    display: flex;
    width: 2509px;
    height: 100vh;
    overflow: hidden;
    border: 1px solid #e0e0e0;
    border-left-color: #f4f4f4;
    border-bottom: none;
    border-radius: 14px 14px 0 0;
}
.page {
    flex: 1;
    display: flex;
    flex-direction: column;
    min-width: 0;
}

/* Header */
.header {
    display: flex;
    align-items: center;
    height: 79px;
    flex-shrink: 0;
    padding: 0 71px 1px 78px;
    border-bottom: 2px solid #e9e9e9;
}
.menu-icon {
    width: 32px;
    height: 36px;
    color: #d0d0d0;
}
.logo {
    display: flex;
    align-items: center;
    margin-left: 38px;
    color: #1c1c1e;
}
.logo-mark {
    width: 55px;
    height: 55px;
}
.logo-text {
    margin-left: 5px;
    font: bold 22px "Liberation Sans", Arial, sans-serif;
}
.header-tools {
    display: flex;
    align-items: center;
    margin-left: auto;
    color: #d0d0d0;
}
.lang {
    display: flex;
    align-items: center;
    width: 79px;
    height: 39px;
    margin-right: 24px;
    padding: 0 0 0 12px;
    border: 1px solid #d0d0d0;
    border-radius: 5px;
    background: #fff;
    color: #919191;
    font: 21px Inter, sans-serif;
}
.lang svg {
    width: 16px;
    height: 18px;
    margin-left: 8px;
    color: #d0d0d0;
}
.tool-icon {
    width: 36px;
    height: 36px;
    margin-right: 24px;
}
.avatar {
    width: 48px;
    height: 48px;
    margin-left: -6px;
    border: 1px solid #a5dcf7;
    border-radius: 50%;
    background: #ce7135;
    color: #fae6db;
    font: 36px/46px Roboto, sans-serif;
    text-align: center;
}

/* Sidebar */
.main {
    flex: 1;
    display: flex;
    min-height: 0;
}
.sidebar {
    width: 472px;
    border-right: 1px solid #e9e9e9;
    padding-left: 76px;
}
.sidebar-scroll {
    height: 1223px;
    width: 360px;
    padding-top: 22px;
    overflow: hidden;
    color: #646464;
}
.section + .section {
    margin-top: 6.6px;
    padding-top: 10px;
    border-top: 1px solid #e9e9e9;
}
.section-title {
    display: flex;
    align-items: center;
    height: 46px;
    margin-bottom: 2px;
    padding: 0 14px 0 15px;
    font-size: 18.5px;
    font-weight: 700;
}
.section-title .caret {
    width: 16px;
    height: 18px;
    margin-right: 23px;
}
.section-title .edit {
    width: 18px;
    height: 18px;
    margin-left: auto;
}
.item {
    position: relative;
    display: flex;
    align-items: center;
    height: 53px;
    margin-bottom: 2.75px;
    padding-left: 12px;
    border-radius: 6px;
    color: #646464;
}
.item svg {
    width: 24px;
    height: 24px;
    margin-right: 17.5px;
}
.item .lock {
    position: absolute;
    top: 14px;
    left: 32px;
    width: 11px;
    height: 12px;
    margin: 0;
}
.item.active {
    background: #f1f1f1;
    color: #444;
    font-weight: 700;
}
.dot {
    width: 14px;
    height: 14px;
    margin: 3px 0 0 12px;
    border-radius: 50%;
    background: #6cf;
}
.c-dev { color: #32c3c3; }
.c-domestic { color: #d12c25; }
.c-resource { color: #12a89d; }
.c-drive { color: #16b176; }
.c-wiki { color: #9cb6c4; }
.c-credit { color: #fecd50; }
.c-job { color: #a8c6fe; }
.c-reading { color: #e0d900; }
.c-startup { color: #ff983b; }
.chat {
    display: flex;
    align-items: center;
    justify-content: center;
    width: 344px;
    height: 61px;
    margin: 24px 0 0 19px;
    padding-top: 3px;
    border: 1px solid #ccc;
    border-radius: 6px;
    background: #fff;
    color: #444;
    font: inherit;
}
.chat svg {
    width: 24px;
    height: 24px;
    margin-right: 11px;
}

/* Content */
.content {
    flex: 1;
    padding: 22px 65px 0 48px;
}
.notice {
    height: 58px;
    padding: 0 24px;
    background: #d1f0ff;
    line-height: 57px;
}
h1, h2, h3, p {
    margin: 0;
}
h1 {
    margin-top: 29px;
    font-size: 47.9px;
    line-height: 58px;
}
h2 {
    margin-top: 37.5px;
    color: #919191;
    font-size: 36.4px;
    line-height: 44px;
}
.badges {
    display: grid;
    grid-template-columns: repeat(4, 1fr);
    gap: 24px;
    margin-top: 14.8px;
}
.badge {
    position: relative;
    display: flex;
    padding: 36px;
    border: 1px solid #e9e9e9;
    border-radius: 6px;
}
.badge-icon {
    width: 84px;
    height: 84px;
    margin-right: 24px;
    color: #cd7f32;
}
.silver {
    color: #c0c0c0;
}
.info h3 {
    padding-top: 3px;
    font-size: 31.67px;
    line-height: 38px;
    word-spacing: -1.5px;
}
.info h3.long {
    padding-top: .7px;
}
.info p {
    margin: 10.7px 0;
}
.info span {
    display: block;
    color: #919191;
    font-size: 20.9px;
}
.granted {
    position: absolute;
    top: 7px;
    right: 7px;
    display: flex;
    align-items: center;
    justify-content: center;
    width: 36px;
    height: 36px;
    border-radius: 50%;
    background: #090;
    color: #fff;
}
.granted svg {
    width: 16px;
    height: 18px;
}
/* Red frame drawn over the first emoji badge */
.highlight {
    position: absolute;
    top: 1px;
    left: 22px;
    width: 395px;
    height: 186px;
    border: 6px solid #ff5252;
    border-radius: 3px;
}

/* Scrollbar */
.scrollbar {
    display: flex;
    flex-direction: column;
    align-items: center;
    width: 23px;
    background: #fbfbfb;
}
.arrow {
    margin-top: 9px;
    border: 6px solid transparent;
    border-top: none;
    border-bottom: 8px solid #8b8b8b;
}
.thumb {
    width: 13px;
    height: 315px;
    margin-top: 9px;
    border-radius: 7px;
    background: #8b8b8b;
}
```
